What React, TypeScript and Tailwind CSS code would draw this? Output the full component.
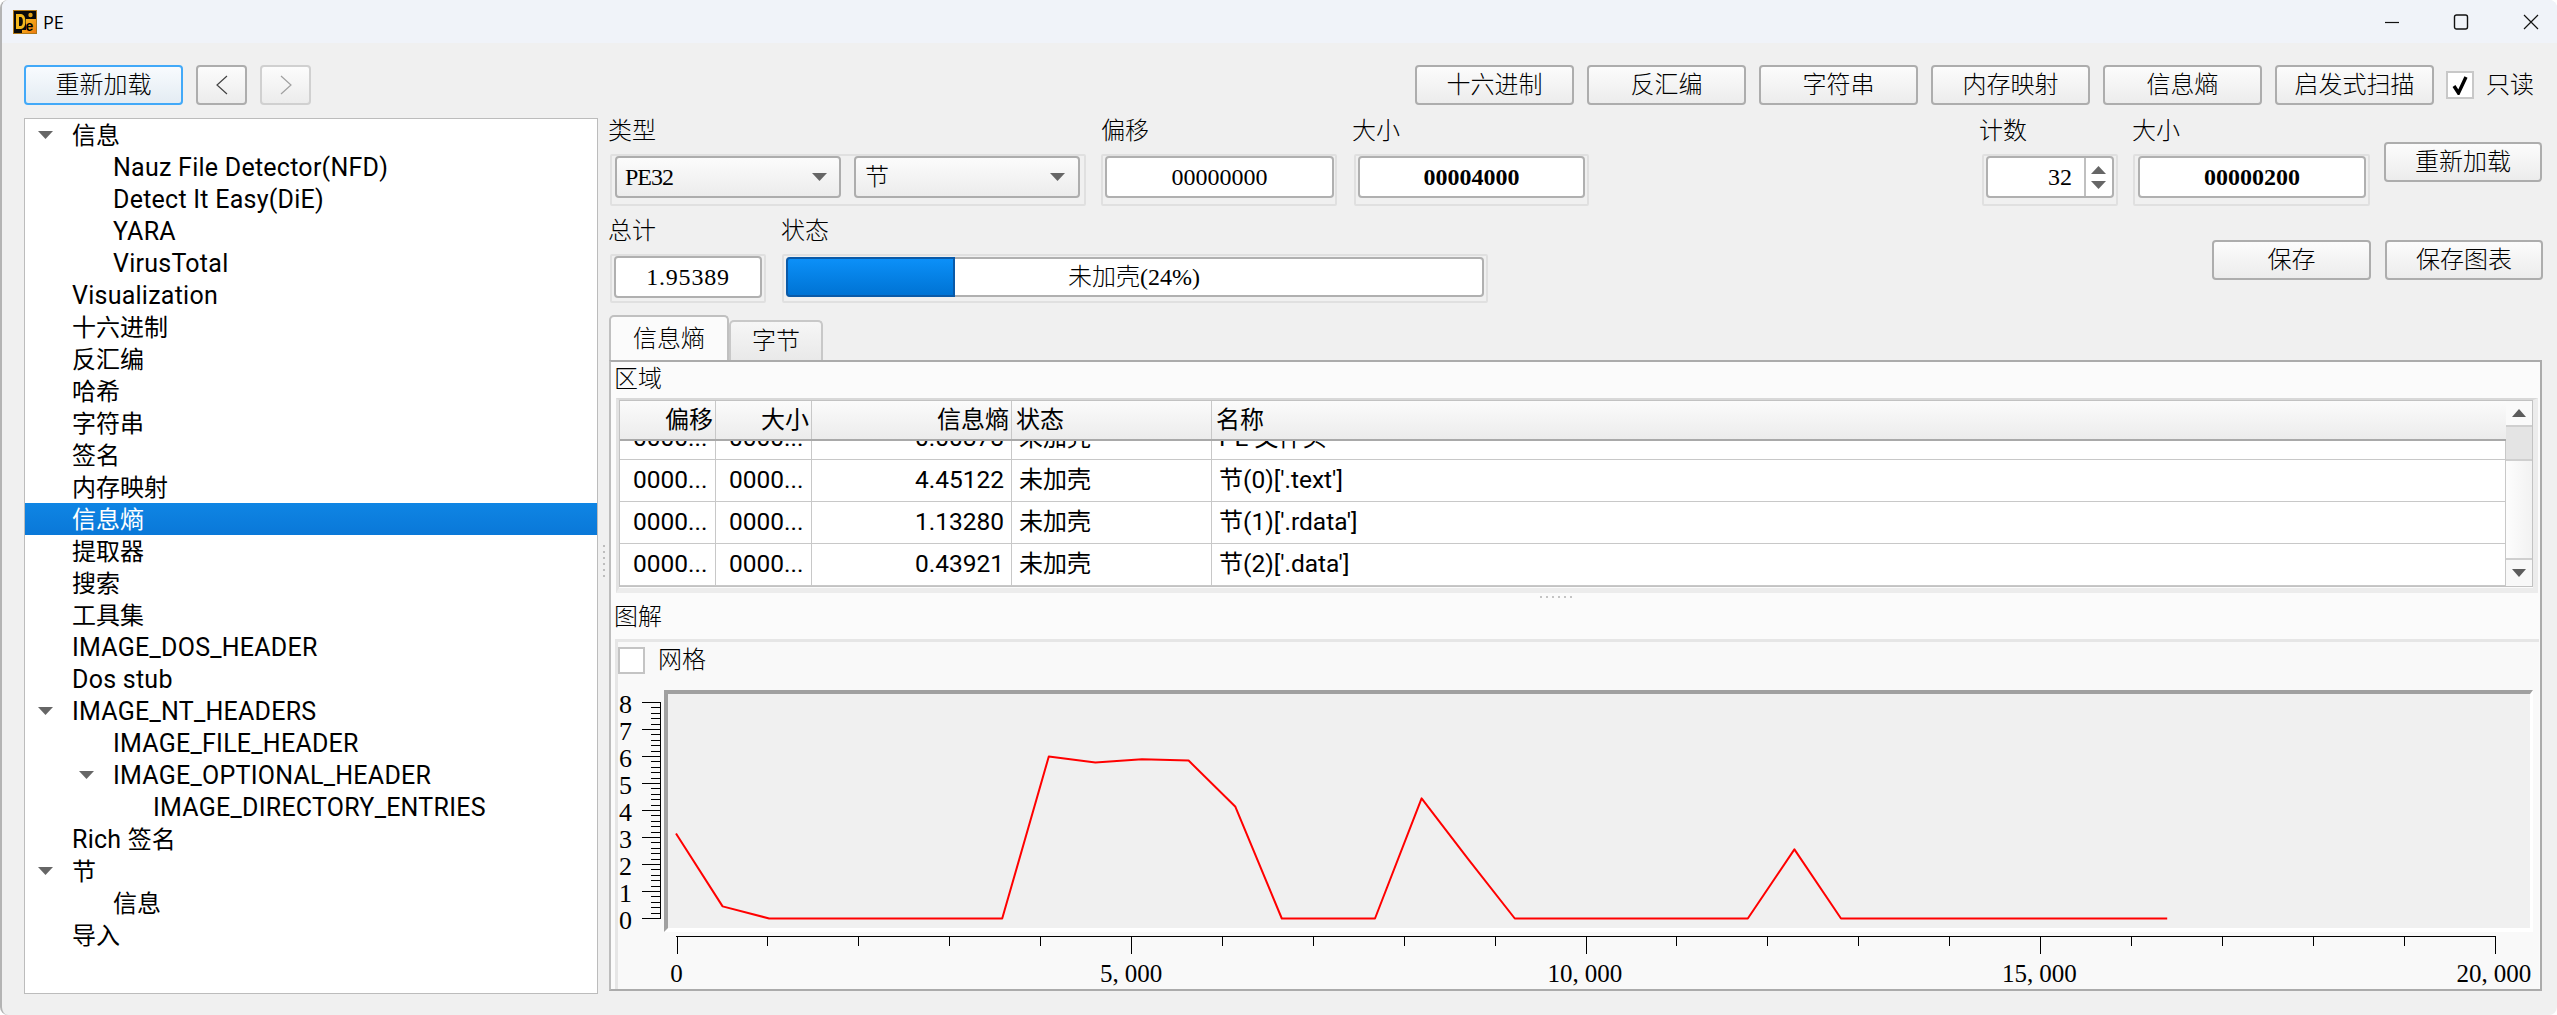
import React from "react";

const btn = "flex items-center justify-center rounded-[4px] border-2 border-[#adadad] bg-gradient-to-b from-[#fcfcfc] to-[#ececec] text-[24px] leading-none text-black font-light";
const frame = "border-2 border-[#e0e0e0] rounded-[2px] px-[2px] pb-[5px] h-[52px] bg-[#f0f0f0]";
const input = "h-[42px] rounded-[4px] border-2 border-[#b0b0b0] bg-white flex items-center text-[24px] leading-none";

const TREE: { t: string; d: number; a?: boolean; s?: boolean }[] = [
  { t: "信息", d: 0, a: true },
  { t: "Nauz File Detector(NFD)", d: 1 },
  { t: "Detect It Easy(DiE)", d: 1 },
  { t: "YARA", d: 1 },
  { t: "VirusTotal", d: 1 },
  { t: "Visualization", d: 0 },
  { t: "十六进制", d: 0 },
  { t: "反汇编", d: 0 },
  { t: "哈希", d: 0 },
  { t: "字符串", d: 0 },
  { t: "签名", d: 0 },
  { t: "内存映射", d: 0 },
  { t: "信息熵", d: 0, s: true },
  { t: "提取器", d: 0 },
  { t: "搜索", d: 0 },
  { t: "工具集", d: 0 },
  { t: "IMAGE_DOS_HEADER", d: 0 },
  { t: "Dos stub", d: 0 },
  { t: "IMAGE_NT_HEADERS", d: 0, a: true },
  { t: "IMAGE_FILE_HEADER", d: 1 },
  { t: "IMAGE_OPTIONAL_HEADER", d: 1, a: true },
  { t: "IMAGE_DIRECTORY_ENTRIES", d: 2 },
  { t: "Rich 签名", d: 0 },
  { t: "节", d: 0, a: true },
  { t: "信息", d: 1 },
  { t: "导入", d: 0 },
];

const INDENT = ["w-0", "w-[41px]", "w-[81px]"];

function Mixed({ t }: { t: string }) {
  const parts = t.split(/([\u4e00-\u9fff]+)/).filter(Boolean);
  return (
    <span className="whitespace-pre">
      {parts.map((p, i) => (
        <span key={i} className={/[\u4e00-\u9fff]/.test(p) ? "text-[24px] tracking-normal" : ""}>{p}</span>
      ))}
    </span>
  );
}

function Arrow({ up = false, w = 15, h = 8, color = "#666666" }: { up?: boolean; w?: number; h?: number; color?: string }) {
  return (
    <svg width={w} height={h} viewBox="0 0 15 8" preserveAspectRatio="none" className="block shrink-0">
      <polygon points={up ? "7.5,0 15,8 0,8" : "0,0 15,0 7.5,8"} fill={color} />
    </svg>
  );
}

const SERIF = { fontFamily: "'Liberation Serif','Noto Sans CJK SC',serif" } as const;
const SANS = { fontFamily: "Roboto,'Noto Sans CJK SC',sans-serif" } as const;

function Tree() {
  return (
    <div className="w-[574px] h-[876px] shrink-0 bg-white border-[1.5px] border-[#bcbcbc] overflow-hidden font-normal" style={SANS}>
      {TREE.map((r, i) => (
        <div key={i} className={`flex items-center h-[32px] text-[25px] tracking-[0.25px] leading-none ${r.s ? "bg-gradient-to-b from-[#0f85e4] to-[#0a78d8] text-white" : "text-black"}`}>
          <div className={`${INDENT[r.d]} shrink-0`} />
          <div className="w-[47px] shrink-0 pl-[13px]">{r.a && <Arrow />}</div>
          <Mixed t={r.t} />
        </div>
      ))}
    </div>
  );
}

const ROWS = [
  ["0000...", "0000...", "0.00878", "未加壳", "PE 文件头"],
  ["0000...", "0000...", "4.45122", "未加壳", "节(0)['.text']"],
  ["0000...", "0000...", "1.13280", "未加壳", "节(1)['.rdata']"],
  ["0000...", "0000...", "0.43921", "未加壳", "节(2)['.data']"],
];

const COLS = "grid grid-cols-[96px_96px_200px_200px_1294px]";

function Table() {
  return (
    <div className="h-[195px] ml-[5px] mr-[2px] border-b-[5px] border-r-[5px] border-[#ececec] border-t-2 border-t-[#d8d8d8] border-l-[3px] border-l-[#e2e2e2] font-normal">
      <div className="h-[187px] flex border border-[#c2c2c2] bg-white">
        <div className="w-[1886px] shrink-0 flex flex-col">
          <div className={`${COLS} h-[40px] bg-gradient-to-b from-[#fbfbfb] to-[#ececec] border-b-[2.5px] border-[#a9a9a9] text-[24px] leading-none shrink-0`} style={SANS}>
            <div className="flex items-center justify-end pr-[2px] border-r border-[#c8c8c8]">偏移</div>
            <div className="flex items-center justify-end pr-[2px] border-r border-[#c8c8c8]">大小</div>
            <div className="flex items-center justify-end pr-[2px] border-r border-[#c8c8c8]">信息熵</div>
            <div className="flex items-center pl-[4px] border-r border-[#c8c8c8]">状态</div>
            <div className="flex items-center pl-[4px]">名称</div>
          </div>
          <div className="flex-1 overflow-hidden border-r border-[#c8c8c8]">
            <div className="-mt-[23px]" style={SANS}>
              {ROWS.map((r, i) => (
                <div key={i} className={`${COLS} h-[42px] border-b border-[#c8c8c8] text-[24.5px] leading-none`}>
                  <div className="flex items-center pl-[13px] border-r border-[#c8c8c8]">{r[0]}</div>
                  <div className="flex items-center pl-[13px] border-r border-[#c8c8c8]">{r[1]}</div>
                  <div className="flex items-center justify-end pr-[7px] border-r border-[#c8c8c8]">{r[2]}</div>
                  <div className="flex items-center pl-[7px] border-r border-[#c8c8c8]"><Mixed t={r[3]} /></div>
                  <div className="flex items-center pl-[7px]"><Mixed t={r[4]} /></div>
                </div>
              ))}
            </div>
          </div>
        </div>
        <div className="flex-1 flex flex-col bg-[#f7f7f7]">
          <div className="h-[26px] border-b-2 border-[#cfcfcf] bg-[#fafafa] flex items-center justify-center"><Arrow up w={14} h={8} color="#5c5c5c" /></div>
          <div className="h-[34px] bg-[#e4e4e4] border-b-2 border-[#cfcfcf]" />
          <div className="flex-1 bg-gradient-to-r from-[#fdfdfd] to-[#f2f2f2]" />
          <div className="h-[28px] border-t-2 border-[#cfcfcf] bg-[#f8f8f8] flex items-center justify-center"><Arrow w={14} h={8} color="#5c5c5c" /></div>
        </div>
      </div>
    </div>
  );
}

const VALS = [3.15, 0.45, 0, 0, 0, 0, 0, 0, 6, 5.78, 5.9, 5.85, 4.15, 0, 0, 0, 4.45, 2.2, 0, 0, 0, 0, 0, 0, 2.56, 0, 0, 0, 0, 0, 0, 0, 0];

function Chart() {
  const X0 = 676.5;
  const XPX = 1818 / 20000;
  const pts = VALS.map((v, i) => `${676 + i * 46.6},${919.5 - v * 27}`).join(" ");
  const yTicks: React.ReactNode[] = [];
  for (let i = 0; i <= 40; i++) {
    const y = 703 + i * 5.4;
    const major = i % 5 === 0;
    yTicks.push(<line key={i} x1={major ? 642 : 651} x2={660} y1={Math.round(y) + 0.5} y2={Math.round(y) + 0.5} stroke="#000" />);
  }
  const xTicks: React.ReactNode[] = [];
  for (let i = 0; i <= 20; i++) {
    const x = Math.round(X0 + i * 1000 * XPX) + 0.5;
    const major = i % 5 === 0;
    xTicks.push(<line key={i} x1={x} x2={x} y1={937} y2={major ? 955 : 947} stroke="#000" />);
  }
  const xLabels = [
    [0, "0", ""],
    [5000, "5,", "000"],
    [10000, "10,", "000"],
    [15000, "15,", "000"],
    [20000, "20,", "000"],
  ] as const;
  return (
    <svg width={1920} height={306} viewBox="618 682 1920 306" className="block" style={SERIF}>
      <rect x={664} y={691} width={1869} height={242} fill="#ffffff" />
      <polygon points="664,691 2533,691 2530,695 668,695 668,929 664,933" fill="#a0a0a0" />
      <rect x={668} y={695} width={1862} height={234} fill="#f0f0f0" />
      {yTicks}
      <line x1={660.5} x2={660.5} y1={703} y2={920} stroke="#000" />
      {[0, 1, 2, 3, 4, 5, 6, 7, 8].map((v) => (
        <text key={v} x={632} y={930 - v * 27} textAnchor="end" fontSize={26} fill="#000">{v}</text>
      ))}
      <line x1={676} x2={2495} y1={937.5} y2={937.5} stroke="#000" />
      {xTicks}
      {xLabels.map(([v, a, b]) => {
        const cx = X0 + v * XPX;
        return (
          <text key={v} x={v === 0 ? cx : cx - (a.length === 2 ? 31 : 38)} y={983} textAnchor={v === 0 ? "middle" : "start"} fontSize={25} fill="#000">
            {a}
            {b && <tspan dx={6}>{b}</tspan>}
          </text>
        );
      })}
      <polyline points={pts} fill="none" stroke="#ff0000" strokeWidth={2} strokeLinejoin="round" />
    </svg>
  );
}

function Logo() {
  return (
    <svg width={24} height={24} viewBox="0 0 24 24" className="block shrink-0">
      <defs>
        <linearGradient id="lg" x1="0" y1="0" x2="1" y2="1">
          <stop offset="0" stopColor="#f8c01e" />
          <stop offset="1" stopColor="#ee7a10" />
        </linearGradient>
      </defs>
      <rect x="0.5" y="0.5" width="23" height="23" fill="#0a0a0a" stroke="#b07818" />
      <polygon points="13,9 23,9 23,23 9,23 9,20 13,20" fill="url(#lg)" />
      <path d="M3 4 H8 C14 4 14 19 8 19 H3 Z M6 7 V16 H8 C10.5 16 10.5 7 8 7 Z" fill="#f4b81c" fillRule="evenodd" />
      <circle cx="17.5" cy="5" r="2.2" fill="#e0a018" />
      <text x="12.5" y="21" fontSize="14" fontWeight="700" fill="#000" style={{ fontFamily: "'Liberation Sans',sans-serif" }}>e</text>
    </svg>
  );
}

function Label({ children, w = "" }: { children: React.ReactNode; w?: string }) {
  return <div className={`text-[24px] leading-none whitespace-nowrap text-black ${w}`}>{children}</div>;
}

export default function App() {
  return (
    <div className="w-[2557px] h-[1015px] flex flex-col bg-[#f0f0f0] overflow-hidden rounded-[8px] border-l-2 border-[#b4b4b4] font-light" style={SERIF}>
      {/* Title bar */}
      <div className="h-[43px] shrink-0 bg-[#f0f3f9] flex items-center pl-[11px] pr-[18px]">
        <Logo />
        <span className="ml-[6px] text-[18px] leading-none text-black font-normal" style={{ fontFamily: "'Open Sans',sans-serif" }}>PE</span>
        <div className="ml-auto flex items-center">
          <svg width={16} height={16} viewBox="0 0 16 16" className="block"><line x1="1" x2="15" y1="8.5" y2="8.5" stroke="#111" strokeWidth="1.2" /></svg>
          <svg width={16} height={16} viewBox="0 0 16 16" className="block ml-[53px]"><rect x="1.5" y="1" width="13" height="14" rx="2" fill="none" stroke="#111" strokeWidth="1.4" /></svg>
          <svg width={16} height={16} viewBox="0 0 16 16" className="block ml-[54px]"><path d="M1 1 L15 15 M15 1 L1 15" stroke="#111" strokeWidth="1.2" fill="none" /></svg>
        </div>
      </div>

      {/* Toolbar */}
      <div className="mt-[22px] h-[40px] shrink-0 flex items-start pl-[22px] pr-[123px]">
        <button className={`${btn} w-[159px] h-[40px] !border-[#42a9f8] !from-[#f8fbfe] !to-[#e4ecf3]`}>重新加载</button>
        <button className={`${btn} w-[51px] h-[40px] ml-[13px]`}>
          <svg width={12} height={20} viewBox="0 0 12 20"><path d="M11 1 L1 10 L11 19" fill="none" stroke="#444" strokeWidth="1.2" /></svg>
        </button>
        <button className={`${btn} w-[51px] h-[40px] ml-[13px] !border-[#d0d0d0]`}>
          <svg width={12} height={20} viewBox="0 0 12 20"><path d="M1 1 L11 10 L1 19" fill="none" stroke="#a0a0a0" strokeWidth="1.2" /></svg>
        </button>
        <div className="ml-auto flex gap-[13px]">
          {["十六进制", "反汇编", "字符串", "内存映射", "信息熵", "启发式扫描"].map((t) => (
            <button key={t} className={`${btn} w-[159px] h-[40px]`}>{t}</button>
          ))}
        </div>
      </div>
      <div className="shrink-0 flex -mt-[34px] h-[28px] pl-[2444px] items-center">
        <div className="w-[28px] h-[28px] bg-white border-2 border-[#c8c8c8] flex items-center justify-center">
          <svg width={18} height={20} viewBox="0 0 18 20"><path d="M3 11 L7.5 18 L15 2" fill="none" stroke="#000" strokeWidth="3.4" /></svg>
        </div>
        <span className="ml-[12px] text-[24px] leading-none">只读</span>
      </div>

      {/* Main */}
      <div className="mt-[19px] flex flex-1 min-h-0 pl-[22px]">
        <Tree />
        <div className="w-[11px] shrink-0 h-[876px] flex flex-col items-center justify-start pt-[427px] gap-[4px]">
          {[0, 1, 2, 3, 4, 5].map((i) => <div key={i} className="w-[2px] h-[2px] bg-[#bdbdbd]" />)}
        </div>

        <div className="w-[1934px] shrink-0 flex flex-col">
          {/* Row 1 */}
          <div className="flex h-[88px] shrink-0 pl-[1px]">
            <div className="w-[476px] flex flex-col">
              <Label w="h-[36px] pt-[1px] -ml-[2px]">类型</Label>
              <div className={`${frame} flex gap-[13px] pl-[3px]`}>
                <div className={`${btn} !justify-between w-[226px] h-[42px] pl-[8px] pr-[12px]`}><span className="tracking-[-1px]">PE32</span><Arrow /></div>
                <div className={`${btn} !justify-between w-[226px] h-[42px] pl-[9px] pr-[13px]`}><span>节</span><Arrow /></div>
              </div>
            </div>
            <div className="w-[236px] ml-[15px] flex flex-col">
              <Label w="h-[36px] pt-[1px]">偏移</Label>
              <div className={`${frame} pr-[1px]`}><div className={`${input} justify-center`}>00000000</div></div>
            </div>
            <div className="w-[235px] ml-[17px] flex flex-col">
              <Label w="h-[36px] pt-[1px] -ml-[2px]">大小</Label>
              <div className={frame}><div className={`${input} justify-center font-bold`}>00004000</div></div>
            </div>
            <div className="w-[136px] ml-[393px] flex flex-col">
              <Label w="h-[36px] pt-[1px] -ml-[3px]">计数</Label>
              <div className={frame}>
                <div className={`${input} w-[128px] justify-end`}>
                  <span className="pr-[12px]">32</span>
                  <div className="w-[28px] h-full border-l-2 border-[#c0c0c0] flex flex-col items-center justify-center gap-[7px] shrink-0 pr-[2px]">
                    <Arrow up w={15} h={8} />
                    <Arrow w={15} h={8} />
                  </div>
                </div>
              </div>
            </div>
            <div className="w-[237px] ml-[15px] flex flex-col">
              <Label w="h-[36px] pt-[1px] -ml-[1px]">大小</Label>
              <div className={`${frame} pl-[2px]`}><div className={`${input} ml-[1px] justify-center font-bold`}>00000200</div></div>
            </div>
            <button className={`${btn} w-[158px] h-[40px] ml-[14px] mt-[24px]`}>重新加载</button>
          </div>

          {/* Row 2 */}
          <div className="flex h-[97px] shrink-0 pl-[1px]">
            <div className="w-[156px] flex flex-col">
              <Label w="h-[48px] pt-[13px] -ml-[2px]">总计</Label>
              <div className={`${frame} !h-[49px]`}><div className={`${input} justify-center tracking-[0.8px]`}>1.95389</div></div>
            </div>
            <div className="w-[706px] ml-[16px] flex flex-col">
              <Label w="h-[48px] pt-[13px] -ml-[1px]">状态</Label>
              <div className={`${frame} !h-[49px]`}>
                <div className="h-[40px] mt-[1px] rounded-[4px] border-2 border-[#b0b0b0] bg-white flex items-stretch">
                  <div className="w-[169px] -my-[2px] -ml-[2px] rounded-l-[4px] bg-gradient-to-b from-[#0c90f8] to-[#0073d4] border-2 border-[#0a5aa8] shrink-0" />
                  <div className="flex-1 flex items-center pl-[113px] text-[24px] leading-none">未加壳(24%)</div>
                </div>
              </div>
            </div>
            <div className="ml-auto flex gap-[14px] mt-[34px] pr-[0px]">
              <button className={`${btn} w-[159px] h-[40px]`}>保存</button>
              <button className={`${btn} w-[158px] h-[40px]`}>保存图表</button>
            </div>
          </div>

          {/* Tabs */}
          <div className="mt-[13px] h-[44px] shrink-0 flex items-end">
            <div className="w-[120px] h-[45px] rounded-t-[5px] border-2 border-b-0 border-[#c0c0c0] bg-[#fbfbfb] flex items-center justify-center text-[24px] leading-none relative z-10">信息熵</div>
            <div className="w-[94px] h-[40px] rounded-t-[5px] border-2 border-b-0 border-[#c8c8c8] bg-gradient-to-b from-[#f6f6f6] to-[#e9e9e9] flex items-center justify-center text-[24px] leading-none">字节</div>
          </div>

          {/* Pane */}
          <div className="w-[1933px] h-[631px] shrink-0 border-2 border-[#ababab] border-l-[#bdbdbd] bg-[#fbfbfb] flex flex-col">
            <div className="h-[36px] shrink-0 flex items-center pl-[3px] text-[24px] leading-none pb-[2px]">区域</div>
            <Table />
            <div className="h-[46px] shrink-0 flex items-center justify-center relative">
              <div className="absolute left-[3px] top-[12px] text-[24px] leading-none">图解</div>
              <div className="flex gap-[4px] -mt-[38px] -ml-[40px]">
                {[0, 1, 2, 3, 4, 5].map((i) => <div key={i} className="w-[2px] h-[2px] bg-[#c4c4c4]" />)}
              </div>
            </div>
            <div className="flex-1 ml-[4px] mr-[1px] border-t-[3px] border-l-[3px] border-[#e6e6e6] bg-[#f9f9f9] flex flex-col overflow-hidden">
              <div className="h-[39px] shrink-0 flex items-center pb-[3px]">
                <div className="w-[27px] h-[27px] bg-white border-2 border-[#c4c4c4]" />
                <span className="ml-[13px] text-[24px] leading-none">网格</span>
              </div>
              <Chart />
            </div>
          </div>
        </div>
      </div>
    </div>
  );
}
